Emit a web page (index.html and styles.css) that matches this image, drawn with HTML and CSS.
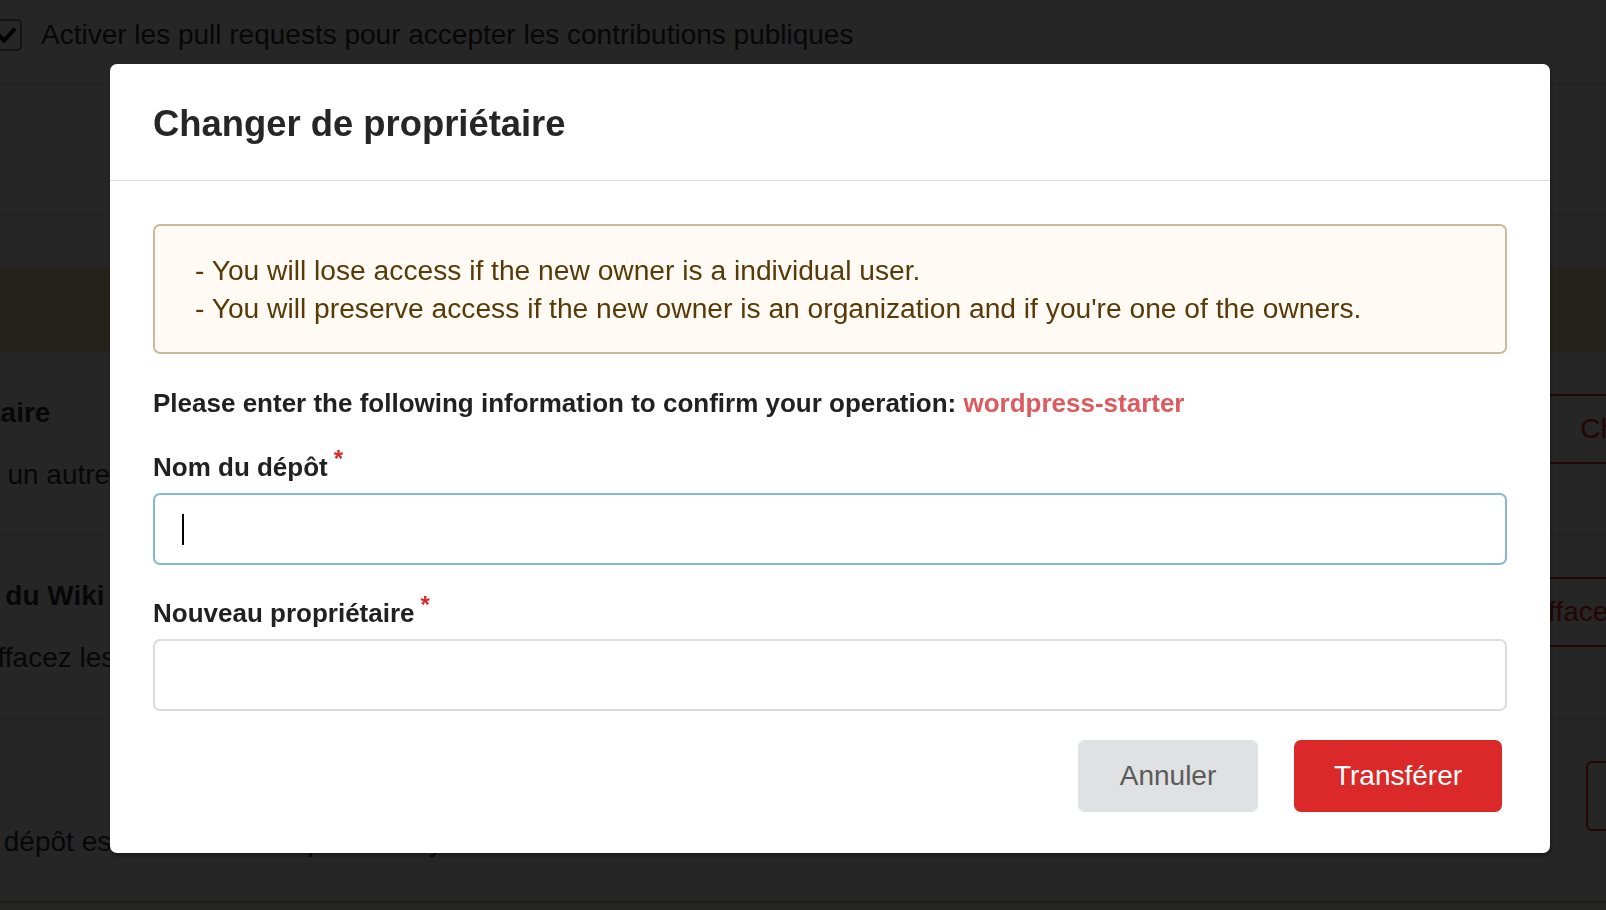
FILE: index.html
```html
<!DOCTYPE html>
<html lang="fr">
<head>
  <meta charset="UTF-8" />
  <title>Paramètres du dépôt</title>
  <link rel="stylesheet" href="styles.css">
</head>
<body>

<div class="page">
  <div class="opt-row">
    <span class="checkbox">
      <svg viewBox="0 0 24 24" width="24" height="24"><path d="M4 12.5l5 5L20 5.5" fill="none" stroke="#000" stroke-width="4"/></svg>
    </span>
    <span>Activer les pull requests pour accepter les contributions publiques</span>
  </div>
  <div class="blank-row"></div>

  <div class="danger-band"></div>

  <div class="setting">
    <div class="setting-info">
      <div class="setting-title">Changer de propriétaire</div>
      <div class="setting-desc">Transférer ce dépôt à un autre utilisateur ou une organisation dont vous êtes administrateur.</div>
    </div>
    <button class="danger-btn">Changer de propriétaire</button>
  </div>

  <div class="setting">
    <div class="setting-info">
      <div class="setting-title">Effacer les données du Wiki</div>
      <div class="setting-desc">Supprimez ce wiki : effacez les données et l'historique du wiki.</div>
    </div>
    <button class="danger-btn">Effacer les données du Wiki</button>
  </div>

  <div class="setting setting-last">
    <div class="setting-info">
      <div class="setting-title">Supprimer ce dépôt</div>
      <div class="setting-desc">Une fois supprimé, le dépôt est définitivement perdu. Soyez-en sûr.</div>
    </div>
    <button class="danger-btn">Supprimer ce dépôt</button>
  </div>
</div>

<!-- Transfer modal -->
<div class="dimmer">
  <div class="modal">
    <div class="modal-header">Changer de propriétaire</div>
    <div class="modal-content">
      <div class="warning">
        - You will lose access if the new owner is a individual user.<br>
        - You will preserve access if the new owner is an organization and if you're one of the owners.
      </div>

      <div class="confirm">Please enter the following information to confirm your operation: <span class="repo-name">wordpress-starter</span></div>

      <div class="field">
        <label class="required">Nom du dépôt</label>
        <div class="input-wrap">
          <input type="text" class="focused">
          <span class="caret"></span>
        </div>
      </div>

      <div class="field">
        <label class="required">Nouveau propriétaire</label>
        <input type="text">
      </div>

      <div class="actions">
        <button class="btn btn-cancel">Annuler</button>
        <button class="btn btn-red">Transférer</button>
      </div>
    </div>
  </div>
</div>

</body>
</html>
```

FILE: styles.css
```css
:root {
  --red: #db2828;
  --text: #212121;
  --border: #d4d4d5;
}

body {
  margin: 0;
  font-family: 'Liberation Sans', Arial, sans-serif;
  background: #fff;
  overflow: hidden;
  height: 910px;
}

/* Settings page behind the modal */
.page {
  margin-left: -267px;
  width: 2185px;
  color: #333;
  font-size: 28px;
}

.opt-row {
  height: 84px;
  box-sizing: border-box;
  padding-left: 259px;
  padding-top: 18px;
  display: flex;
  align-items: flex-start;
  gap: 19px;
  line-height: 34px;
  border-bottom: 1px solid var(--border);
}

.checkbox {
  width: 26px;
  height: 28px;
  border: 2px solid #888;
  border-radius: 5px;
  display: flex;
  align-items: center;
  justify-content: center;
  margin-top: 1px;
}

.blank-row {
  height: 130px;
  border-bottom: 1px solid var(--border);
}

.danger-band {
  margin-top: 53px;
  height: 85px;
  background: #f7e3bb;
}

.setting {
  display: flex;
  justify-content: space-between;
  align-items: flex-start;
  height: 182px;
  box-sizing: border-box;
  padding-top: 41px;
  border-bottom: 1px solid var(--border);
}

.setting + .setting {
  padding-top: 42px;
  height: 184px;
}

.setting-last {
  border-bottom: 2px solid #c9ba9b;
}

.setting-info {
  padding-top: 1px;
}

.setting-title {
  font-weight: bold;
  line-height: 36px;
}

.setting-desc {
  margin-top: 26px;
  line-height: 36px;
  white-space: nowrap;
}

.danger-btn {
  height: 70px;
  padding: 0 40px;
  font-family: inherit;
  font-size: 28px;
  color: var(--red);
  background: #fff;
  border: 2px solid var(--red);
  border-radius: 6px;
}

.setting-last .danger-btn {
  margin-right: 4px;
}

/* Modal */
.dimmer {
  position: fixed;
  top: 0;
  left: 0;
  width: 100%;
  height: 100%;
  background: rgba(0, 0, 0, 0.85);
  padding: 64px 0 0 110px;
  box-sizing: border-box;
}

.modal {
  width: 1440px;
  background: #fff;
  border-radius: 7px;
  box-shadow: 1px 3px 4px rgba(0, 0, 0, 0.35);
}

.modal-header {
  height: 117px;
  box-sizing: border-box;
  padding: 3px 43px 0;
  display: flex;
  align-items: center;
  border-bottom: 1px solid #dcdcdc;
  font-size: 36.4px;
  font-weight: bold;
  color: #262626;
}

.modal-content {
  padding: 43px 43px 41px;
}

.warning {
  background: #fffaf3;
  border: 2px solid #c9ba9b;
  border-radius: 7px;
  color: #573a08;
  font-size: 28.2px;
  line-height: 38px;
  padding: 25px 40px;
}

.confirm {
  margin-top: 30px;
  font-size: 26px;
  line-height: 38px;
  font-weight: bold;
  color: var(--text);
}

.repo-name {
  color: #dd5a5e;
}

.field {
  margin-top: 26px;
  display: flex;
  flex-direction: column;
  gap: 7px;
}

.field + .field {
  margin-top: 29px;
}

label {
  font-size: 26px;
  line-height: 38px;
  font-weight: bold;
  color: var(--text);
}

label.required::after {
  content: '*';
  color: var(--red);
  margin-left: 6px;
  font-size: 24px;
  vertical-align: top;
  position: relative;
  top: -8px;
}

.input-wrap {
  position: relative;
}

input[type="text"] {
  display: block;
  width: 100%;
  box-sizing: border-box;
  height: 72px;
  padding: 0 28px;
  font-size: 28px;
  font-family: inherit;
  border: 2px solid #dcdcdd;
  border-radius: 7px;
  outline: none;
  background: #fff;
}

input.focused {
  border-color: #85b7d9;
}

.caret {
  position: absolute;
  left: 29px;
  top: 21px;
  width: 2px;
  height: 31px;
  background: #000;
}

.actions {
  margin-top: 29px;
  display: flex;
  justify-content: flex-end;
  gap: 36px;
  padding-right: 5px;
}

.btn {
  height: 72px;
  border: none;
  border-radius: 7px;
  font-family: inherit;
  font-size: 28px;
  cursor: pointer;
}

.btn-cancel {
  width: 180px;
  background: #e0e1e2;
  color: #5a5a5a;
}

.btn-red {
  width: 208px;
  background: var(--red);
  color: #fff;
}
```
